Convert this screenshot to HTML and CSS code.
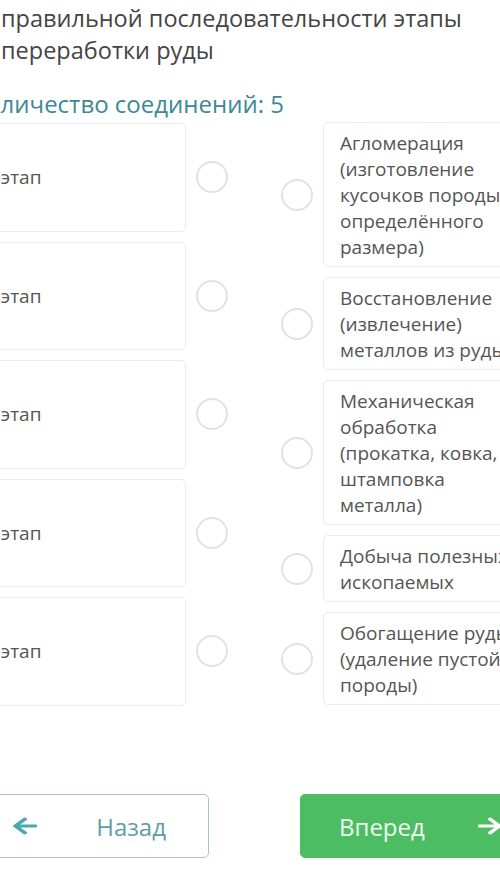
FILE: index.html
```html
<!DOCTYPE html>
<html lang="ru">
<head>
<meta charset="utf-8">
<link rel="stylesheet" href="styles.css">
</head>
<body>
<div class="page">
  <p class="title">правильной последовательности этапы<br>переработки руды</p>
  <p class="count">Количество соединений: 5</p>
  <div class="match">
    <div class="col col-left">
      <div class="row"><div class="card stage">1 этап</div><span class="dot"></span></div>
      <div class="row"><div class="card stage">2 этап</div><span class="dot"></span></div>
      <div class="row"><div class="card stage">3 этап</div><span class="dot"></span></div>
      <div class="row"><div class="card stage">4 этап</div><span class="dot"></span></div>
      <div class="row"><div class="card stage">5 этап</div><span class="dot"></span></div>
    </div>
    <div class="col col-right">
      <div class="row"><span class="dot"></span><div class="card answer">Агломерация (изготовление кусочков породы определённого размера)</div></div>
      <div class="row"><span class="dot"></span><div class="card answer">Восстановление (извлечение) металлов из руды</div></div>
      <div class="row"><span class="dot"></span><div class="card answer">Механическая обработка (прокатка, ковка, штамповка металла)</div></div>
      <div class="row"><span class="dot"></span><div class="card answer">Добыча полезных ископаемых</div></div>
      <div class="row"><span class="dot"></span><div class="card answer">Обогащение руды (удаление пустой породы)</div></div>
    </div>
  </div>
  <div class="nav">
    <button class="btn btn-back">
      <svg class="arrow" viewBox="0 0 448 512" preserveAspectRatio="none"><path d="M257.5 445.1l-22.2 22.2c-9.4 9.4-24.6 9.4-33.9 0L7 273c-9.4-9.4-9.4-24.6 0-33.9L201.4 44.7c9.4-9.4 24.6-9.4 33.9 0l22.2 22.2c9.5 9.5 9.3 25-.4 34.3L136.6 216H424c13.3 0 24 10.7 24 24v32c0 13.3-10.7 24-24 24H136.6l120.5 114.8c9.8 9.3 10 24.8.4 34.3z"/></svg>
      <span>Назад</span>
    </button>
    <button class="btn btn-next">
      <span>Вперед</span>
      <svg class="arrow" viewBox="0 0 448 512" preserveAspectRatio="none"><path d="M190.5 66.9l22.2-22.2c9.4-9.4 24.6-9.4 33.9 0L441 239c9.4 9.4 9.4 24.6 0 33.9L246.6 467.3c-9.4 9.4-24.6 9.4-33.9 0l-22.2-22.2c-9.5-9.5-9.3-25 .4-34.3L311.4 296H24c-13.3 0-24-10.7-24-24v-32c0-13.3 10.7-24 24-24h287.4L190.9 101.2c-9.8-9.3-10-24.8-.4-34.3z"/></svg>
    </button>
  </div>
</div>
</body>
</html>
```
FILE: styles.css
```css
html, body {
  margin: 0;
  padding: 0;
  background: #ffffff;
  overflow: hidden;
}
body {
  font-family: "Open Sans", "Liberation Sans", sans-serif;
  color: #4a4a4a;
}
.page {
  margin-left: -32px;
  width: 573px;
  padding-top: 2px;
}
.title {
  margin: 0;
  padding-left: 33px;
  font-size: 23.5px;
  line-height: 32px;
  color: #454545;
}
.count {
  margin: 23px 0 0 3.5px;
  font-size: 24px;
  line-height: 30px;
  color: #3d8896;
}
.match {
  display: flex;
  align-items: flex-start;
  gap: 53px;
  margin-top: 4px;
}
.col {
  display: flex;
  flex-direction: column;
  width: 260px;
}
.col-left { gap: 10px; }
.col-right { gap: 10px; margin-top: -1px; }
.row {
  display: flex;
  align-items: center;
  gap: 10px;
}
.card {
  box-sizing: border-box;
  width: 218px;
  background: #fff;
  border: 1px solid #ebebeb;
  border-radius: 5px;
  font-size: 19px;
  line-height: 26px;
  color: #555;
}
.stage {
  height: 108.5px;
  display: flex;
  align-items: center;
  padding: 0 16px;
}
.answer {
  padding: 7px 22px 6px 16px;
}
.dot {
  flex: none;
  box-sizing: border-box;
  width: 32px;
  height: 32px;
  border: 2px solid #e2e2e2;
  border-radius: 50%;
  background: #fff;
}
.nav {
  display: flex;
  gap: 91px;
  margin-top: 88.5px;
}
.btn {
  box-sizing: border-box;
  width: 241px;
  height: 64px;
  border-radius: 5px;
  display: flex;
  align-items: center;
  justify-content: space-between;
  font-family: "Open Sans", "Liberation Sans", sans-serif;
  font-size: 24px;
  cursor: pointer;
}
.btn-back {
  background: #fff;
  border: 1px solid #a9c5c9;
  color: #5e9ea6;
  padding: 0 42px 0 44px;
}
.btn-back .arrow { fill: #4ba7b0; }
.btn-next {
  background: #4dbd63;
  border: 1px solid #4dbd63;
  color: #eefaf0;
  padding: 0 38px 0 38px;
}
.btn-next .arrow { fill: #ffffff; }
.arrow {
  width: 24px;
  height: 20px;
}
```
